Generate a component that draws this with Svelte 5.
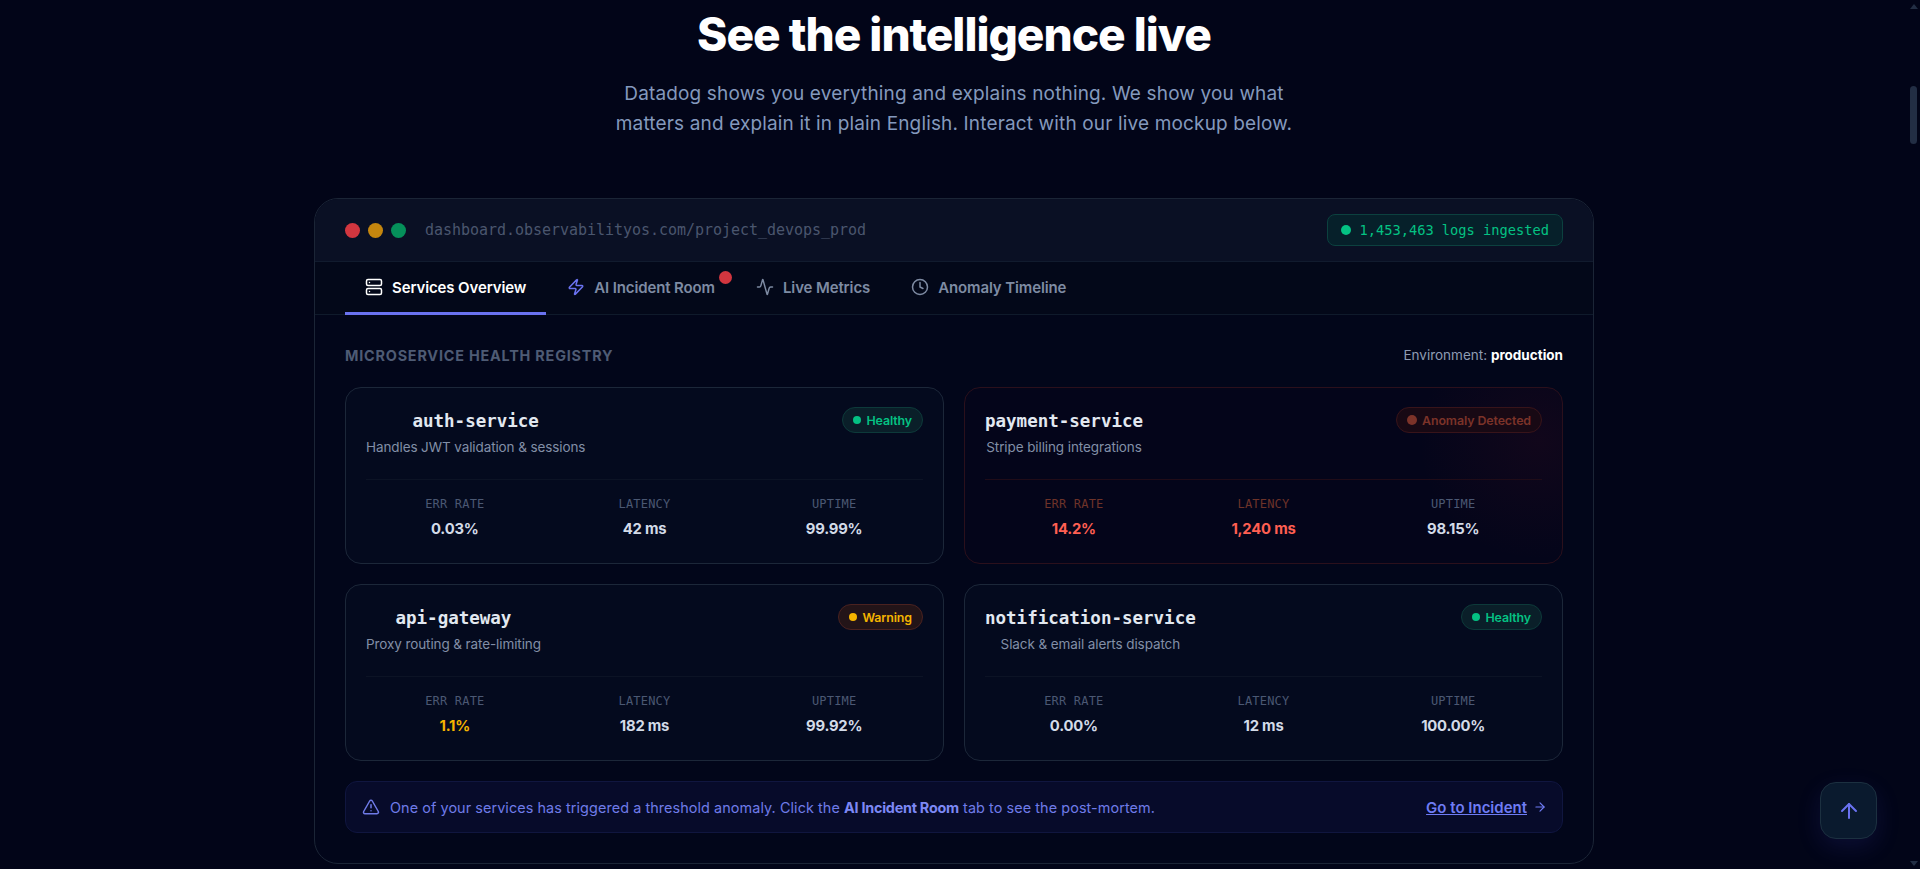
<script lang="ts">
	const tabs = [
		{ label: 'Services Overview', icon: 'server', active: true },
		{ label: 'AI Incident Room', icon: 'zap', ping: true },
		{ label: 'Live Metrics', icon: 'activity' },
		{ label: 'Anomaly Timeline', icon: 'clock' }
	];

	const services = [
		{ name: 'auth-service', desc: 'Handles JWT validation & sessions', status: 'healthy', badge: 'Healthy', err: '0.03%', latency: '42 ms', uptime: '99.99%' },
		{ name: 'payment-service', desc: 'Stripe billing integrations', status: 'anomaly', badge: 'Anomaly Detected', err: '14.2%', latency: '1,240 ms', uptime: '98.15%' },
		{ name: 'api-gateway', desc: 'Proxy routing & rate-limiting', status: 'warning', badge: 'Warning', err: '1.1%', latency: '182 ms', uptime: '99.92%' },
		{ name: 'notification-service', desc: 'Slack & email alerts dispatch', status: 'healthy', badge: 'Healthy', err: '0.00%', latency: '12 ms', uptime: '100.00%' }
	];
</script>

{#snippet tabIcon(name: string)}
	<svg class="icon" class:zap={name === 'zap'} viewBox="0 0 24 24" fill="none" stroke="currentColor" stroke-width="2" stroke-linecap="round" stroke-linejoin="round">
		{#if name === 'server'}
			<rect x="2" y="2" width="20" height="8" rx="2" />
			<rect x="2" y="14" width="20" height="8" rx="2" />
			<line x1="6" y1="6" x2="6.01" y2="6" />
			<line x1="6" y1="18" x2="6.01" y2="18" />
		{:else if name === 'zap'}
			<path d="M4 14a1 1 0 0 1-.78-1.63l9.9-10.2a.5.5 0 0 1 .86.46l-1.92 6.02A1 1 0 0 0 13 10h7a1 1 0 0 1 .78 1.63l-9.9 10.2a.5.5 0 0 1-.86-.46l1.92-6.02A1 1 0 0 0 11 14z" />
		{:else if name === 'activity'}
			<path d="M22 12h-2.48a2 2 0 0 0-1.93 1.46l-2.35 8.36a.25.25 0 0 1-.48 0L9.24 2.18a.25.25 0 0 0-.48 0l-2.35 8.36A2 2 0 0 1 4.49 12H2" />
		{:else}
			<circle cx="12" cy="12" r="10" />
			<polyline points="12 6 12 12 16 14" />
		{/if}
	</svg>
{/snippet}

<div class="page">
	<section class="hero">
		<h1>See the intelligence live</h1>
		<p>
			Datadog shows you everything and explains nothing. We show you what<br />
			matters and explain it in plain English. Interact with our live mockup below.
		</p>
	</section>

	<div class="window">
		<header class="titlebar">
			<div class="titlebar-left">
				<span class="light red"></span>
				<span class="light amber"></span>
				<span class="light green"></span>
				<span class="url">dashboard.observabilityos.com/project_devops_prod</span>
			</div>
			<div class="ingest"><span class="ingest-dot"></span>1,453,463 logs ingested</div>
		</header>

		<nav class="tabs">
			{#each tabs as tab}
				<div class="tab" class:active={tab.active}>
					{@render tabIcon(tab.icon)}
					<span>{tab.label}</span>
					{#if tab.ping}<span class="ping"></span>{/if}
				</div>
			{/each}
		</nav>

		<div class="content">
			<div class="content-head">
				<h2>MICROSERVICE HEALTH REGISTRY</h2>
				<div class="env">Environment: <b>production</b></div>
			</div>

			<div class="grid">
				{#each services as s}
					<article class="card {s.status}">
						<div class="card-head">
							<div class="card-title">
								<div class="name">{s.name}</div>
								<div class="desc">{s.desc}</div>
							</div>
							<div class="badge"><span class="badge-dot"></span>{s.badge}</div>
						</div>
						<div class="metrics">
							<div class="metric hot">
								<div class="metric-label">ERR RATE</div>
								<div class="metric-value err">{s.err}</div>
							</div>
							<div class="metric hot">
								<div class="metric-label">LATENCY</div>
								<div class="metric-value lat">{s.latency}</div>
							</div>
							<div class="metric">
								<div class="metric-label">UPTIME</div>
								<div class="metric-value">{s.uptime}</div>
							</div>
						</div>
					</article>
				{/each}
			</div>

			<div class="alert">
				<div class="alert-text">
					<svg class="icon" viewBox="0 0 24 24" fill="none" stroke="currentColor" stroke-width="2" stroke-linecap="round" stroke-linejoin="round">
						<path d="m21.73 18-8-14a2 2 0 0 0-3.48 0l-8 14A2 2 0 0 0 4 21h16a2 2 0 0 0 1.73-3" />
						<path d="M12 9v4" />
						<path d="M12 17h.01" />
					</svg>
					<span>One of your services has triggered a threshold anomaly. Click the <b>AI Incident Room</b> tab to see the post-mortem.</span>
				</div>
				<div class="alert-link">
					<u>Go to Incident</u>
					<svg class="arrow" viewBox="0 0 24 24" fill="none" stroke="currentColor" stroke-width="2" stroke-linecap="round" stroke-linejoin="round">
						<path d="M5 12h14" />
						<path d="m12 5 7 7-7 7" />
					</svg>
				</div>
			</div>
		</div>
	</div>

	<button class="to-top" aria-label="Back to top">
		<svg viewBox="0 0 24 24" fill="none" stroke="currentColor" stroke-width="2" stroke-linecap="round" stroke-linejoin="round">
			<path d="m5 12 7-7 7 7" />
			<path d="M12 19V5" />
		</svg>
	</button>

	<div class="scrollbar">
		<span class="tri up"></span>
		<span class="thumb"></span>
		<span class="tri down"></span>
	</div>
</div>

<style>
	:global(body) {
		margin: 0;
		background: #020518;
		overflow: hidden;
	}

	.page {
		height: 869px;
		padding-right: 12px;
		box-sizing: border-box;
		overflow: hidden;
		background: #020518;
		font-family: Inter, "Liberation Sans", sans-serif;
		color: #e2e8f0;
	}

	.hero {
		padding-top: 6px;
		text-align: center;
	}

	h1 {
		margin: 0;
		height: 56px;
		font-size: 46px;
		line-height: 56px;
		font-weight: 800;
		letter-spacing: -1px;
		color: #fff;
	}

	.hero p {
		margin: 17px 0 0;
		font-size: 19px;
		line-height: 30px;
		letter-spacing: 0.15px;
		color: #8499bd;
		white-space: nowrap;
	}

	.window {
		width: 1280px;
		box-sizing: border-box;
		margin: 59px auto 0;
		height: 666px;
		border: 1px solid #1b2536;
		border-radius: 24px;
		background: #02061a;
		overflow: hidden;
	}

	.titlebar {
		display: flex;
		align-items: center;
		justify-content: space-between;
		height: 62px;
		padding: 0 30px;
		background: #0a1024;
		border-bottom: 1px solid #111b2e;
	}

	.titlebar-left {
		display: flex;
		align-items: center;
		gap: 8px;
	}

	.light {
		width: 15px;
		height: 15px;
		border-radius: 50%;
	}

	.red { background: #d2363f; }
	.amber { background: #c5860e; }
	.green { background: #05905a; }

	.url {
		margin-left: 11px;
		font-family: "DejaVu Sans Mono", monospace;
		font-size: 15px;
		letter-spacing: -0.03px;
		color: #4a566e;
	}

	.ingest {
		display: flex;
		align-items: center;
		gap: 8px;
		height: 32px;
		box-sizing: border-box;
		padding: 0 13px;
		border: 1px solid #0c413f;
		border-radius: 8px;
		background: #06202a;
		font-family: "DejaVu Sans Mono", monospace;
		font-size: 13.7px;
		color: #04c283;
	}

	.ingest-dot {
		width: 10px;
		height: 10px;
		border-radius: 50%;
		background: #04c283;
	}

	.tabs {
		display: flex;
		gap: 1px;
		height: 52px;
		padding: 0 30px;
		border-bottom: 1px solid #0f1a2b;
		background: #030819;
	}

	.tab {
		position: relative;
		display: flex;
		align-items: center;
		gap: 9px;
		padding: 0 20px;
		margin-bottom: -1px;
		border-bottom: 3px solid transparent;
		box-sizing: border-box;
		font-size: 15px;
		font-weight: 600;
		letter-spacing: -0.12px;
		color: #7e8ba3;
	}

	.tab.active {
		color: #fff;
		border-bottom-color: #6a72f0;
	}

	.icon {
		width: 18px;
		height: 18px;
		flex: none;
	}

	.icon.zap {
		color: #6a72f0;
	}

	.ping {
		position: absolute;
		top: 9px;
		right: 3px;
		width: 13px;
		height: 13px;
		border-radius: 50%;
		background: #d2363f;
	}

	.content {
		padding: 0 30px;
	}

	.content-head {
		display: flex;
		align-items: center;
		justify-content: space-between;
		height: 64px;
		padding-top: 8px;
	}

	h2 {
		margin: 0;
		font-size: 14.4px;
		font-weight: 700;
		letter-spacing: 0.8px;
		color: #4e5b74;
	}

	.env {
		font-size: 13.5px;
		color: #8f9cb3;
	}

	.env b {
		font-weight: 700;
		color: #fff;
	}

	.grid {
		display: grid;
		grid-template-columns: 1fr 1fr;
		grid-auto-rows: 177px;
		gap: 20px;
	}

	.card {
		box-sizing: border-box;
		padding: 20px;
		border: 1px solid #1c2739;
		border-radius: 16px;
		background: #040a1e;
	}

	.card.anomaly {
		border-color: #2b101c;
		background:
			radial-gradient(circle at 96% 30%, rgba(190, 30, 40, 0.07), rgba(190, 30, 40, 0) 120px),
			#04051a;
	}

	.card-head {
		display: flex;
		align-items: flex-start;
		justify-content: space-between;
		height: 71px;
		border-bottom: 1px solid #0c1325;
		box-sizing: content-box;
	}

	.anomaly .card-head {
		border-bottom-color: #200c18;
	}

	.card-title {
		text-align: center;
	}

	.name {
		height: 28px;
		margin-top: -1px;
		font-family: "DejaVu Sans Mono", monospace;
		font-size: 17.5px;
		line-height: 28px;
		font-weight: 700;
		color: #e2e8f0;
	}

	.desc {
		margin-top: 2px;
		font-size: 13.5px;
		line-height: 20px;
		letter-spacing: -0.1px;
		color: #828fa7;
	}

	.badge {
		display: flex;
		align-items: center;
		gap: 5px;
		height: 26px;
		margin-top: -1px;
		box-sizing: border-box;
		padding: 0 10px;
		border: 1px solid #0d3a3a;
		border-radius: 13px;
		background: #0a1f29;
		font-size: 12.4px;
		font-weight: 600;
		letter-spacing: -0.1px;
		color: #04c283;
	}

	.badge-dot {
		width: 8px;
		height: 8px;
		border-radius: 50%;
		background: currentColor;
	}

	.warning .badge {
		border-color: #4a2220;
		background: #231418;
		color: #f5b400;
	}

	.anomaly .badge {
		border-color: #38141a;
		background: #180914;
		color: #7c3329;
	}

	.anomaly .badge-dot {
		width: 10px;
		height: 10px;
	}

	.metrics {
		display: grid;
		grid-template-columns: repeat(3, 1fr);
		gap: 12px;
		padding-top: 15px;
		text-align: center;
	}

	.metric-label {
		font-family: "DejaVu Sans Mono", monospace;
		font-size: 12px;
		line-height: 18px;
		letter-spacing: 0.2px;
		color: #4b5873;
	}

	.metric-value {
		margin-top: 6px;
		font-size: 14.8px;
		line-height: 20px;
		font-weight: 700;
		letter-spacing: -0.2px;
		color: #d3dbe8;
	}

	.anomaly .hot .metric-label {
		color: #6e3329;
	}

	.anomaly .hot .metric-value {
		color: #ff5f52;
	}

	.warning .err {
		color: #f5b400;
	}

	.alert {
		display: flex;
		align-items: center;
		justify-content: space-between;
		height: 52px;
		box-sizing: border-box;
		margin-top: 20px;
		padding: 0 15px 0 16px;
		border: 1px solid #10163f;
		border-radius: 12px;
		background: #070b2a;
		font-size: 14.4px;
		letter-spacing: 0.08px;
		color: #6f7be8;
	}

	.alert-text {
		display: flex;
		align-items: center;
		gap: 10px;
	}

	.alert-text b {
		font-weight: 700;
		letter-spacing: -0.25px;
		color: #7d88f5;
	}

	.alert-link {
		display: flex;
		align-items: center;
		gap: 6px;
		font-size: 15px;
		font-weight: 600;
		letter-spacing: 0;
		color: #6f7cf5;
	}

	.arrow {
		width: 14px;
		height: 14px;
	}

	.to-top {
		position: fixed;
		left: 1820px;
		top: 782px;
		display: flex;
		align-items: center;
		justify-content: center;
		width: 57px;
		height: 57px;
		padding: 0;
		border: 1px solid #1c3040;
		border-radius: 16px;
		background: #0a1a2e;
		color: #6a72f0;
		box-shadow: 0 8px 24px rgba(80, 80, 230, 0.14);
	}

	.to-top svg {
		width: 24px;
		height: 24px;
	}

	.scrollbar {
		position: fixed;
		top: 0;
		right: 0;
		bottom: 0;
		width: 12px;
		background: #020518;
	}

	.thumb {
		position: absolute;
		top: 86px;
		left: 2px;
		width: 7px;
		height: 58px;
		border-radius: 4px;
		background: #222e44;
	}

	.tri {
		position: absolute;
		left: 2px;
		width: 0;
		height: 0;
		border-left: 4px solid transparent;
		border-right: 4px solid transparent;
	}

	.tri.up {
		top: 4px;
		border-bottom: 5px solid #222e44;
	}

	.tri.down {
		bottom: 3px;
		border-top: 5px solid #222e44;
	}
</style>
